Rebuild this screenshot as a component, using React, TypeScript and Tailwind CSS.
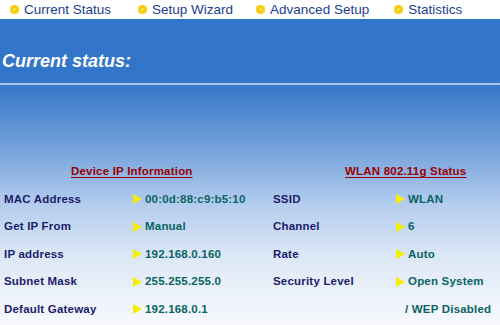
import React from "react";

const navItems: [string, string][] = [
  ["Current Status", "ml-0"],
  ["Setup Wizard", "ml-[27px]"],
  ["Advanced Setup", "ml-[23px]"],
  ["Statistics", "ml-[25px]"],
];

const leftRows: [string, string][] = [
  ["MAC Address", "00:0d:88:c9:b5:10"],
  ["Get IP From", "Manual"],
  ["IP address", "192.168.0.160"],
  ["Subnet Mask", "255.255.255.0"],
  ["Default Gateway", "192.168.0.1"],
];

const rightRows: [string, string, boolean][] = [
  ["SSID", "WLAN", true],
  ["Channel", "6", true],
  ["Rate", "Auto", true],
  ["Security Level", "Open System", true],
  ["", "/ WEP Disabled", false],
];

// gelber Pfeil vor den Werten
function Arrow() {
  return (
    <svg width="9" height="10" viewBox="0 0 9 10" className="shrink-0">
      <polygon points="0,0 9,5 0,10" fill="#f5ee00" />
    </svg>
  );
}

function Dot() {
  return (
    <span className="inline-block w-[9px] h-[9px] rounded-full bg-[#f2c400] shadow-[inset_0_0_0_2px_#f7d21a] relative">
      <span className="absolute left-[3px] top-[3px] w-[3px] h-[3px] rounded-full bg-[#ffe45a]" />
    </span>
  );
}

export default function App() {
  return (
    <div className="w-[500px] h-[325px] overflow-hidden flex flex-col font-['Liberation_Sans',Arial,sans-serif]">
      {/* Menü oben */}
      <div className="h-[19px] bg-white flex items-center pl-[10px] text-[13.5px] text-[#1d3d8e] leading-none whitespace-nowrap">
        {navItems.map(([item, margin]) => (
          <div key={item} className={"flex items-center gap-[5px] " + margin}>
            <Dot />
            <span>{item}</span>
          </div>
        ))}
      </div>

      <div className="h-[64px] bg-[#3375c8] flex items-end pb-[13px] pl-[2px]">
        <h1 className="text-white italic font-bold text-[18px] leading-none">Current status:</h1>
      </div>
      <div className="h-[2px] bg-[#a8c6ea]" />

      <div className="flex-1 bg-[linear-gradient(to_bottom,#3576c8_0%,#7ea8de_30%,#b4cdee_50%,#dde8f6_72%,#f7f9fd_100%)] pt-[73px] text-[11.5px] font-bold tracking-[0.2px] whitespace-nowrap">
        <div className="grid grid-cols-[129px_140px_123px_1fr] pl-[4px]">
          <div className="col-span-2 h-[27.5px] flex items-center pl-[67px]">
            <span className="text-[#990000] underline underline-offset-[2px]">Device IP Information</span>
          </div>
          <div className="col-span-2 h-[27.5px] flex items-center pl-[72px]">
            <span className="text-[#990000] underline underline-offset-[2px]">WLAN 802.11g Status</span>
          </div>

          {leftRows.map(([label, value], i) => (
            <React.Fragment key={label}>
              <div className="h-[27.5px] flex items-center text-[#1c1c6a]">{label}</div>
              <div className="h-[27.5px] flex items-center gap-[3px] text-[#0a6464]">
                <Arrow />
                <span>{value}</span>
              </div>
              <div className="h-[27.5px] flex items-center text-[#1c1c6a]">{rightRows[i][0]}</div>
              <div className="h-[27.5px] flex items-center gap-[3px] text-[#0a6464]">
                {rightRows[i][2] ? <Arrow /> : <span className="w-[6px]" />}
                <span>{rightRows[i][1]}</span>
              </div>
            </React.Fragment>
          ))}
        </div>
      </div>
    </div>
  );
}
